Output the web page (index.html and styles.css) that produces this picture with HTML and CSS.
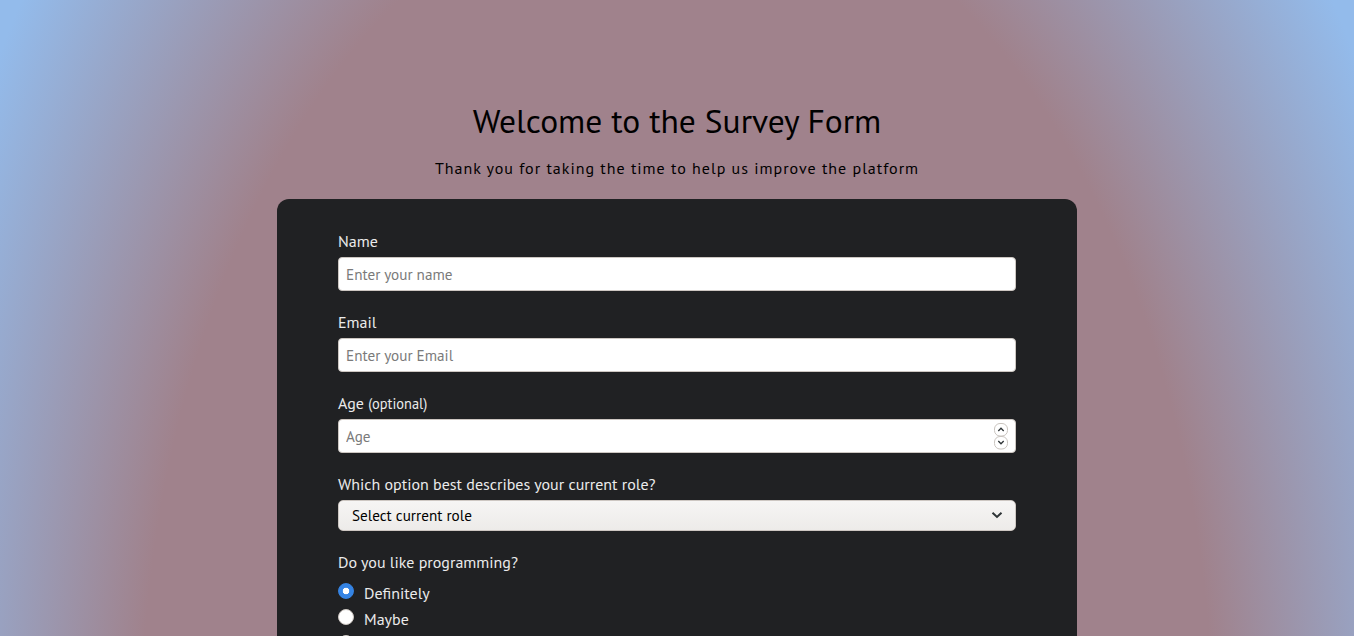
FILE: index.html
```html
<!DOCTYPE html>
<html lang="en">
<head>
<meta charset="utf-8">
<title>Survey Form</title>
<link rel="stylesheet" href="styles.css">
</head>
<body>
<div class="page">
  <header class="intro">
    <h1 class="title">Welcome to the Survey Form</h1>
    <p class="subtitle">Thank you for taking the time to help us improve the platform</p>
  </header>
  <form class="card">
    <div class="field">
      <label class="label" for="name">Name</label>
      <input class="input" id="name" type="text" placeholder="Enter your name">
    </div>
    <div class="field">
      <label class="label" for="email">Email</label>
      <input class="input" id="email" type="email" placeholder="Enter your Email">
    </div>
    <div class="field">
      <label class="label" for="age">Age <span class="small">(optional)</span></label>
      <div class="control">
        <input class="input number" id="age" type="number" placeholder="Age">
        <svg class="spinner" width="14" height="27" viewBox="0 0 14 27" aria-hidden="true">
          <rect x="0.5" y="0.5" width="13" height="12.5" rx="5.5" fill="#fff" stroke="#c9c4bf"/>
          <rect x="0.5" y="13.5" width="13" height="12.5" rx="5.5" fill="#fff" stroke="#c9c4bf"/>
          <path d="M4.3 8 L7 5.2 L9.7 8" fill="none" stroke="#2e3436" stroke-width="1.3"/>
          <path d="M4.3 18 L7 20.8 L9.7 18" fill="none" stroke="#2e3436" stroke-width="1.3"/>
        </svg>
      </div>
    </div>
    <div class="field">
      <label class="label" for="role">Which option best describes your current role?</label>
      <div class="control">
        <select class="select" id="role">
          <option>Select current role</option>
          <option>Student</option>
          <option>Full Time Job</option>
        </select>
        <svg class="chevron" width="12" height="8" viewBox="0 0 12 8" aria-hidden="true">
          <path d="M1.5 1.8 L6 6 L10.5 1.8" fill="none" stroke="#2e3436" stroke-width="2"/>
        </svg>
      </div>
    </div>
    <div class="field">
      <p class="label">Do you like programming?</p>
      <div class="radios">
        <label class="radio-row"><input class="radio" type="radio" name="like" checked> Definitely</label>
        <label class="radio-row"><input class="radio" type="radio" name="like"> Maybe</label>
        <label class="radio-row"><input class="radio" type="radio" name="like"> Not sure</label>
      </div>
    </div>
  </form>
</div>
</body>
</html>
```
FILE: styles.css
```css
html, body {
  margin: 0;
  padding: 0;
}
body {
  font-family: "PT Sans", "Noto Sans", sans-serif;
  min-height: 100vh;
  background-color: #93bbeb;
  background-image: radial-gradient(ellipse 800px 1300px at 677px 745px, #a0828c 67%, #93bbeb 100%);
  background-repeat: no-repeat;
  color: #ebebeb;
}
.page {
  display: flex;
  flex-direction: column;
  align-items: center;
  padding-top: 100px;
}
.intro {
  text-align: center;
  color: #000;
}
.title {
  margin: 0;
  font-size: 33.5px;
  font-weight: 400;
  line-height: 42px;
}
.subtitle {
  margin: 16px 0 0;
  font-size: 16px;
  letter-spacing: 1px;
  line-height: 20px;
}
.card {
  margin-top: 21px;
  width: 800px;
  box-sizing: border-box;
  background: #202123;
  border-radius: 12px;
  padding: 32px 61px 40px;
}
.field {
  display: flex;
  flex-direction: column;
  margin-bottom: 21px;
}
.label {
  margin: 0 0 6px;
  font-size: 16px;
  line-height: 20px;
  color: #ebebeb;
}
.small {
  font-size: 14.4px;
  line-height: 1;
}
.control {
  position: relative;
  display: flex;
  flex-direction: column;
}
.input {
  height: 34px;
  box-sizing: border-box;
  border: 1px solid #cdc7c2;
  border-radius: 4px;
  padding: 0 7px;
  font-family: inherit;
  font-size: 15.2px;
  margin: 0;
  background: #fff;
  color: #000;
}
.input::placeholder {
  color: #7a7a7a;
}
.number {
  appearance: textfield;
  -moz-appearance: textfield;
}
.number::-webkit-inner-spin-button,
.number::-webkit-outer-spin-button {
  -webkit-appearance: none;
  margin: 0;
}
.spinner {
  position: absolute;
  right: 8px;
  top: 4px;
  pointer-events: none;
}
.select {
  appearance: none;
  -webkit-appearance: none;
  height: 31px;
  box-sizing: border-box;
  border: 1px solid #cdc7c2;
  border-radius: 5px;
  padding: 0 30px 0 13px;
  font-family: inherit;
  font-size: 15.2px;
  margin: 0;
  color: #000;
  background: linear-gradient(#f6f5f4, #edebe9);
}
.chevron {
  position: absolute;
  right: 13px;
  top: 11px;
  pointer-events: none;
}
.radios {
  display: flex;
  flex-direction: column;
  margin-top: 2px;
}
.radio-row {
  display: flex;
  align-items: center;
  gap: 10px;
  font-size: 16px;
  line-height: 26px;
  color: #ebebeb;
}
.radio {
  appearance: none;
  -webkit-appearance: none;
  width: 16px;
  height: 16px;
  margin: 0;
  border-radius: 50%;
  box-sizing: border-box;
  border: 1px solid #cdc7c2;
  background: #fff;
  position: relative;
  top: -2px;
}
.radio:checked {
  border-color: #3584e4;
  background: radial-gradient(circle, #fff 0 3px, #3584e4 3.6px);
}
```
